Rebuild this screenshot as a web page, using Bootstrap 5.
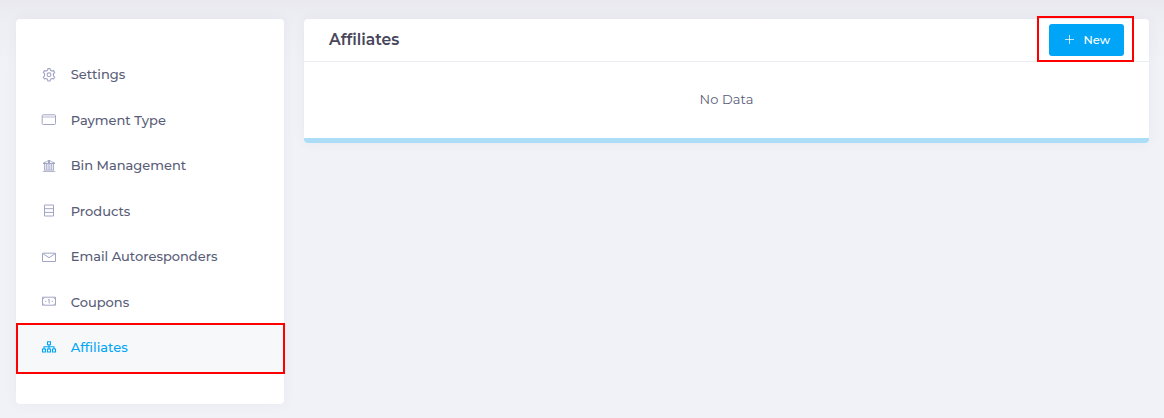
<!DOCTYPE html>
<html lang="en">
<head>
<meta charset="utf-8">
<meta name="viewport" content="width=device-width, initial-scale=1">
<title>Affiliates</title>
<link href="https://cdn.jsdelivr.net/npm/bootstrap@5.3.0/dist/css/bootstrap.min.css" rel="stylesheet">
<style>
body{background:linear-gradient(#eae9f0 0,#eeeff5 28px,#f1f2f8 65px) #f1f2f8;background-repeat:no-repeat;font-family:Montserrat,Inter,sans-serif;font-size:13px;color:#595d78;height:418px;overflow:hidden}
.page{padding:19px 15px 0 16px;gap:20px}
.panel{background:#fff;border-radius:4px;box-shadow:0 0 13px rgba(82,63,105,.05)}
.side{width:268px;height:385px;padding-top:32.5px}
.side .nav-link{height:45.5px;padding:0 25px;gap:13.7px;color:#595d78;font-weight:500;line-height:20px;border-radius:0}
.side .nav-link svg{width:16px;height:16px;margin-top:1px;color:#a2a5c4;flex:none}
.side .nav-link.active{background:#f7f8fa;color:#00a5f7;height:47px;padding-bottom:2.5px}
.side .nav-link.active svg{color:#00a5f7}
.marked{position:relative}
.marked::after{content:"";position:absolute;border:2px solid #f00;pointer-events:none}
.side .marked::after{inset:-1.5px -1px -2.5px 0}
.new-wrap::after{inset:-8px -10px -6px -12px}
.panel-head{height:43px;padding:0 25px;border-bottom:1px solid #ebedf2}
.panel-head h1{font-size:15.6px;font-weight:600;color:#48465b;line-height:20px}
.btn-new{width:75px;height:32px;background:#00a5f7;color:#fff;font-size:11.5px;font-weight:500;border-radius:3px;border:0;padding:1px 14px 0 15px;line-height:1}
.btn-new svg{position:relative;top:-1px}
.btn-new:hover{background:#0094de;color:#fff}
.empty{height:76px;font-weight:400;letter-spacing:.08px}
.foot{height:5px;background:#abddf6;border-radius:0 0 4px 4px}
</style>
</head>
<body>
<div class="page d-flex align-items-start">
  <nav class="panel side nav flex-column flex-nowrap flex-shrink-0">
    <a class="nav-link d-flex align-items-center" href="#"><svg viewBox="0 0 16 16" fill="none" stroke="currentColor"><path d="M6.500 3.300 6.900 1.600h2.200l.4 1.700 1.400.8 1.700-.5 1.100 1.900-1.300 1.200v2.200l1.300 1.200-1.100 1.900-1.700-.5-1.400.8-.4 1.700H6.900l-.4-1.700-1.400-.8-1.700.5-1.100-1.900 1.300-1.200V6.700L2.300 5.500l1.100-1.900 1.700.5z" stroke-linejoin="round" stroke-width="1.100"/><circle cx="8" cy="7.800" r="1.900" stroke-width="1.100"/></svg><span>Settings</span></a>
    <a class="nav-link d-flex align-items-center" href="#"><svg viewBox="0 0 16 16" fill="none" stroke="currentColor"><rect x="1.200" y="2.800" width="13.300" height="9.700" rx="1"/><path d="M1.500 5h13" stroke-opacity=".8"/></svg><span>Payment Type</span></a>
    <a class="nav-link d-flex align-items-center" href="#"><svg viewBox="0 0 16 16" fill="none" stroke="currentColor"><path d="M2 5.500h12M2.500 4.700C5 4.300 6 3.300 8 2.200c2 1.100 3 2.100 5.500 2.500"/><path d="M8 3v2" stroke-width="2"/><path d="M3.700 6v6M5.800 6v6M8 6v6M10.200 6v6M12.300 6v6" stroke-width="1.100"/><path d="M3 12.200h10M1.800 13.500h12.400" stroke-opacity=".8"/></svg><span>Bin Management</span></a>
    <a class="nav-link d-flex align-items-center" href="#"><svg viewBox="0 0 16 16" fill="none" stroke="currentColor"><path d="M3.500 2h9v11h-9zM3.500 5.700h9M3.500 9.400h9"/></svg><span>Products</span></a>
    <a class="nav-link d-flex align-items-center" href="#"><svg viewBox="0 0 16 16" fill="none" stroke="currentColor"><path d="M1.500 4.200h13v8.300h-13zM2 4.700l6 4L14 4.700"/></svg><span>Email Autoresponders</span></a>
    <a class="nav-link d-flex align-items-center" href="#"><svg viewBox="0 0 16 16" fill="none" stroke="currentColor"><path d="M1.500 3.200h13v8h-13z"/><path d="M7 6 8.200 5.300v4.200M4 7.300h1.300M10.700 7.300H12M2 5.100 3.200 3.800M14 5.100 12.800 3.800M2 9.500 3.200 10.800M14 9.500 12.800 10.800"/></svg><span>Coupons</span></a>
    <a class="nav-link active marked d-flex align-items-center" href="#"><svg viewBox="0 0 16 16" fill="none" stroke="currentColor" stroke-width="1.100"><path d="M6.500 2.700h3v3h-3zM8 5.700v4M3 10v-2.200h10V10M1.500 10h3v3h-3zM6.500 10h3v3h-3zM11.500 10h3v3h-3z"/></svg><span>Affiliates</span></a>
  </nav>
  <main class="panel flex-grow-1">
    <div class="panel-head d-flex align-items-center justify-content-between">
      <h1 class="m-0">Affiliates</h1>
      <div class="new-wrap marked"><button class="btn btn-new d-flex align-items-center justify-content-between" type="button"><svg width="11" height="11" viewBox="0 0 11 11" stroke="#fff" stroke-opacity=".75"><path d="M5.500 1v9M1 5.500h9"/></svg><span>New</span></button></div>
    </div>
    <div class="empty d-flex align-items-center justify-content-center">No Data</div>
    <div class="foot"></div>
  </main>
</div>
<script src="https://cdn.jsdelivr.net/npm/bootstrap@5.3.0/dist/js/bootstrap.bundle.min.js"></script>
</body>
</html>
